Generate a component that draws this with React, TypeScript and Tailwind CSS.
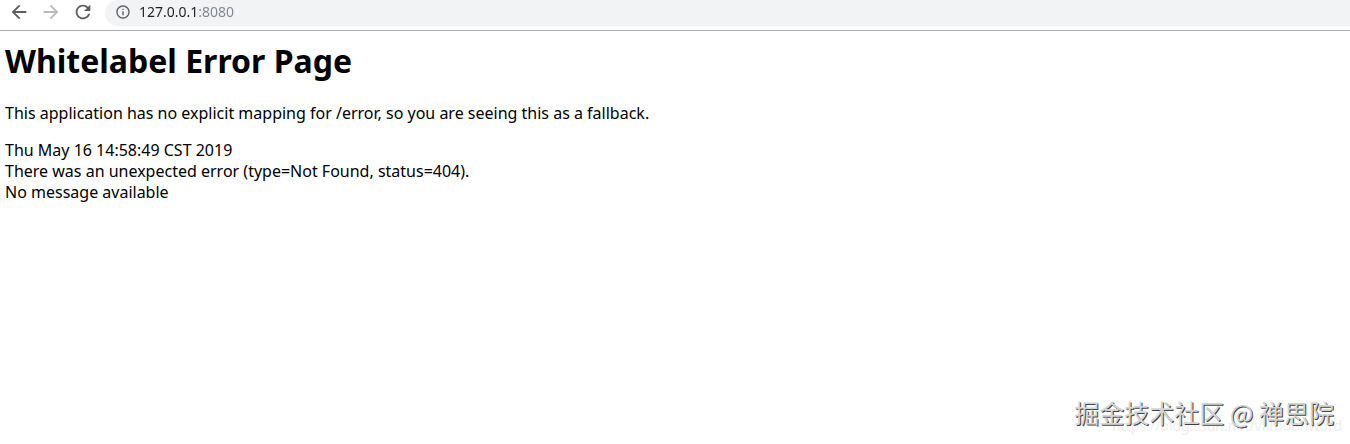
import React from 'react';
import { MdArrowBack, MdArrowForward, MdInfoOutline, MdRefresh } from 'react-icons/md';

function Toolbar() {
  return (
    <header className="flex h-[31px] items-start border-b border-[#a9acaf] bg-white pl-2">
      <nav className="flex h-6 items-center gap-2.5">
        <button type="button" aria-label="Back" className="text-[#5a5d61]">
          <MdArrowBack className="size-[22px]" />
        </button>
        <button type="button" aria-label="Forward" disabled className="text-[#b8babc]">
          <MdArrowForward className="size-[22px]" />
        </button>
        <button type="button" aria-label="Reload" className="text-[#5a5d61]">
          <MdRefresh className="size-[22px]" />
        </button>
      </nav>
      <div className="ml-[11px] flex h-[26px] flex-1 items-start rounded-l-[13px] bg-[#f1f3f4] pl-2.5">
        <button type="button" aria-label="View site information" className="flex h-6 items-center text-[#5a5d61]">
          <MdInfoOutline className="size-4" />
        </button>
        {/* host is dark, port is muted */}
        <input
          type="text"
          aria-label="Address"
          defaultValue="127.0.0.1:8080"
          className="ml-2 h-[22px] min-w-0 flex-1 bg-linear-to-r from-[#202124] from-[59px] to-[#80868b] to-[59px] bg-clip-text text-sm text-transparent outline-none"
        />
      </div>
    </header>
  );
}

function ErrorPage() {
  return (
    <main className="flex-1 px-[5px] pt-2 text-base leading-[21px] text-black">
      <h1 className="text-[32px] leading-[44px] font-bold">Whitelabel Error Page</h1>
      <p className="mt-5">
        This application has no explicit mapping for /error, so you are seeing this as a fallback.
      </p>
      <div className="mt-4">Thu May 16 14:58:49 CST 2019</div>
      <div>There was an unexpected error (type=Not Found, status=404).</div>
      <div>No message available</div>
    </main>
  );
}

function Watermark() {
  return (
    <footer className="grid justify-items-end pr-2 pb-2 whitespace-nowrap">
      <span className="col-start-1 row-start-1 self-end text-sm leading-5 text-[#eeeeee]">
        https://blog.csdn.net/vamonnword
      </span>
      <span className="col-start-1 row-start-1 mb-1 pr-2 font-['Noto_Sans_CJK_SC',sans-serif] text-[25px] leading-[40px] text-[#d4d4d4] [text-shadow:1px_1px_0_#444]">
        掘金技术社区 @ 禅思院
      </span>
    </footer>
  );
}

export default function App() {
  return (
    <div className="flex min-h-screen flex-col bg-white font-['Noto_Sans','Noto_Sans_CJK_SC',sans-serif]">
      <Toolbar />
      <ErrorPage />
      <Watermark />
    </div>
  );
}
